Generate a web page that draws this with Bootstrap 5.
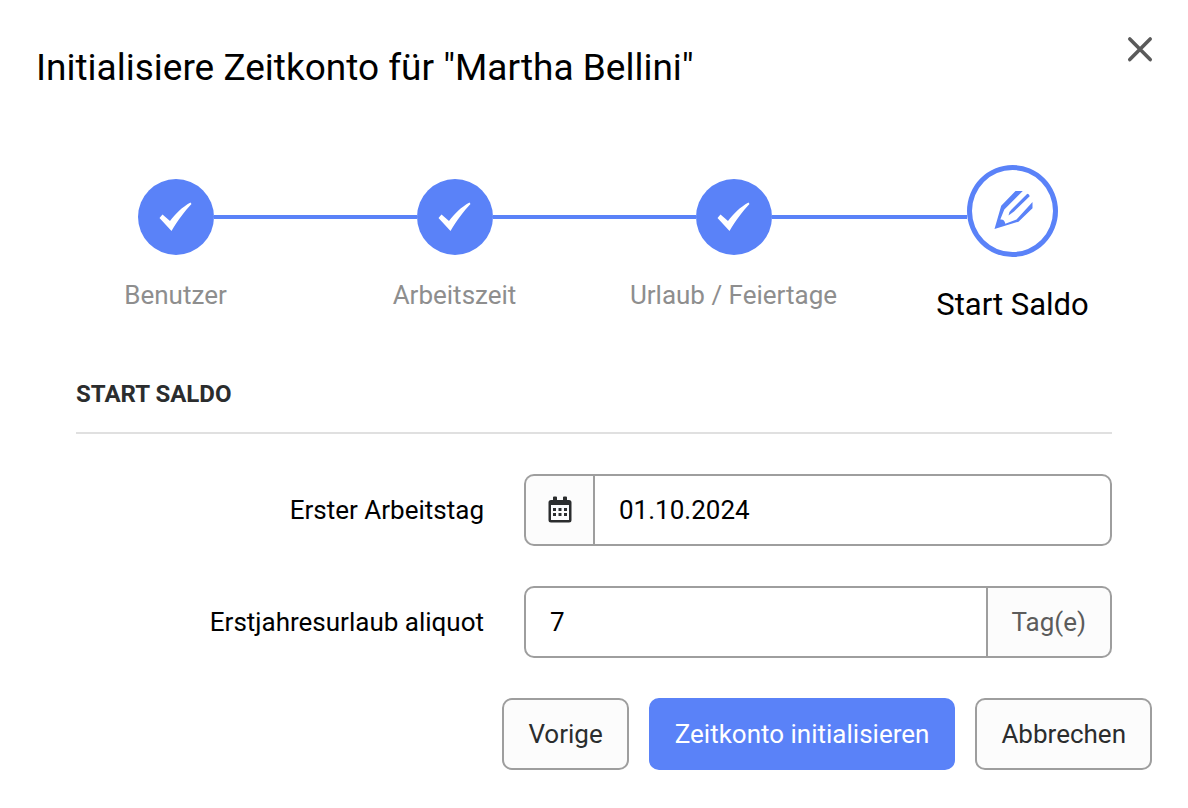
<!DOCTYPE html>
<html lang="de">
<head>
<meta charset="utf-8">
<meta name="viewport" content="width=device-width, initial-scale=1">
<title>Initialisiere Zeitkonto</title>
<link href="https://cdn.jsdelivr.net/npm/bootstrap@5.3.0/dist/css/bootstrap.min.css" rel="stylesheet">
<style>
  :root { --accent: #5a82f8; --edge: #9e9e9e; --soft: #fcfcfc; --ink: #2b2d2e; }
  body { font-family: Roboto, "Liberation Sans", sans-serif; font-size: 26px; line-height: 32px; color: #000; background: #fff; }
  .dialog-pane { padding: 36px; }
  .dialog-title { font-size: 37px; line-height: 64px; font-weight: 400; color: #000; }
  .close-btn { width: 24px; height: 26px; line-height: 0; }
  .stepper { margin-top: 65px; }
  .step-item { flex: 1 1 0; text-align: center; }
  .step-track { height: 104px; }
  .step-line { flex: 1 1 0; height: 4px; background: var(--accent); }
  .step-item:first-child .step-line:first-child,
  .step-item:last-child .step-line:last-child { visibility: hidden; }
  .step-dot { width: 76px; height: 76px; border-radius: 50%; background: var(--accent); color: #fff; }
  .step-text { line-height: 52px; color: #8e8e8e; }
  .is-current .step-dot { width: 91px; height: 92px; background: #fff; color: var(--accent); border: 5px solid var(--accent); align-self: flex-start; }
  .is-current .step-text { font-size: 31px; line-height: 72px; margin-bottom: -2px; color: #000; }
  .form-area { padding: 0 40px; }
  .section-title { font-size: 24px; line-height: 32px; font-weight: 700; color: var(--ink); margin: 39px 0 40px; padding-bottom: 22px; border-bottom: 2px solid #e0e0e0; }
  .field-row { display: grid; grid-template-columns: 408fr 588fr; column-gap: 40px; align-items: center; margin-bottom: 40px; }
  .field-row label { text-align: right; }
  .field-row .input-group-text, .field-row .form-control { height: 72px; font-size: 26px; line-height: 32px; border: 2px solid var(--edge); border-radius: 10px; padding: 0 24px; }
  .field-row .form-control { color: #000; background: #fff; }
  .field-row .input-group-text { background: var(--soft); color: #5c5c5c; }
  .field-row .input-group > .icon-addon { padding: 0 22px; color: var(--ink); border-right: 0; }
  .field-row .input-group > .unit-addon { border-left: 0; }
  .actions { gap: 20px; }
  .actions .btn { height: 72px; font-size: 26px; line-height: 32px; border: 2px solid var(--edge); border-radius: 10px; padding: 0 24px; background: var(--soft); color: var(--ink); }
  .actions .btn-main { background: var(--accent); border-color: var(--accent); color: #fff; }
</style>
</head>
<body>
<main class="dialog-pane">
  <header class="d-flex justify-content-between align-items-start">
    <h1 class="dialog-title m-0">Initialisiere Zeitkonto für "Martha Bellini"</h1>
    <button type="button" class="close-btn btn border-0 p-0" aria-label="Schließen">
      <svg width="24" height="26" viewBox="0 0 24 26" fill="none" stroke="#5a5a5a" stroke-width="3.600" stroke-linecap="round" overflow="visible"><path d="M1.800 3 22.200 23.600M22.200 3 1.800 23.600"/></svg>
    </button>
  </header>

  <ol class="stepper d-flex list-unstyled mb-0">
    <li class="step-item">
      <div class="step-track d-flex align-items-center"><span class="step-line"></span>
        <span class="step-dot d-flex align-items-center justify-content-center"><svg width="36" height="36" viewBox="0 0 36 36" fill="currentColor"><path d="M1.500 19 4.500 15.500 12 22C17 15.500 24 8 32.500 3.500L33.500 5C26 13 20 21 13.500 32Z"/></svg></span>
        <span class="step-line"></span></div>
      <div class="step-text">Benutzer</div>
    </li>
    <li class="step-item">
      <div class="step-track d-flex align-items-center"><span class="step-line"></span>
        <span class="step-dot d-flex align-items-center justify-content-center"><svg width="36" height="36" viewBox="0 0 36 36" fill="currentColor"><path d="M1.500 19 4.500 15.500 12 22C17 15.500 24 8 32.500 3.500L33.500 5C26 13 20 21 13.500 32Z"/></svg></span>
        <span class="step-line"></span></div>
      <div class="step-text">Arbeitszeit</div>
    </li>
    <li class="step-item">
      <div class="step-track d-flex align-items-center"><span class="step-line"></span>
        <span class="step-dot d-flex align-items-center justify-content-center"><svg width="36" height="36" viewBox="0 0 36 36" fill="currentColor"><path d="M1.500 19 4.500 15.500 12 22C17 15.500 24 8 32.500 3.500L33.500 5C26 13 20 21 13.500 32Z"/></svg></span>
        <span class="step-line"></span></div>
      <div class="step-text">Urlaub / Feiertage</div>
    </li>
    <li class="step-item is-current" aria-current="step">
      <div class="step-track d-flex align-items-center"><span class="step-line"></span>
        <span class="step-dot d-flex align-items-center justify-content-center"><svg width="44" height="44" viewBox="0 0 44 44" fill="currentColor"><path d="M3.500 40 10.200 16.700 24.500 2H31.800L13.300 20.500 9.300 30.500Q13.500 30 14.300 34.700L25.500 30.500 41.500 13V19.300L27.500 32.700Z"/><path d="M36.300 4.800Q38.500 5 38.700 7.200L23 22.500 17.500 26.500Q17.500 23 20.500 20.500Z"/></svg></span>
        <span class="step-line"></span></div>
      <div class="step-text">Start Saldo</div>
    </li>
  </ol>

  <form>
    <div class="form-area">
      <h2 class="section-title text-uppercase">Start Saldo</h2>
      <div class="field-row">
        <label for="first-day">Erster Arbeitstag</label>
        <div class="input-group">
          <span class="input-group-text icon-addon"><svg width="24" height="28" viewBox="0 0 24 28" fill="currentColor"><path fill-rule="evenodd" d="M5 4V1.500Q5 .5 6 .5H8Q9 .5 9 1.500V4H15V1.500Q15 .5 16 .5H18Q19 .5 19 1.500V4H21Q23.500 4 23.500 6.500V24Q23.500 26.500 21 26.500H3Q.5 26.500 .5 24V6.500Q.5 4 3 4ZM3 9V24H21V9ZM5 12H8V15H5ZM10.500 12H13.500V15H10.500ZM16 12H19V15H16ZM5 17H8V20H5ZM10.500 17H13.500V20H10.500ZM16 17H19V20H16Z"/></svg></span>
          <input type="text" class="form-control" id="first-day" value="01.10.2024">
        </div>
      </div>
      <div class="field-row">
        <label for="vacation">Erstjahresurlaub aliquot</label>
        <div class="input-group">
          <input type="text" class="form-control" id="vacation" value="7" inputmode="numeric">
          <span class="input-group-text unit-addon">Tag(e)</span>
        </div>
      </div>
    </div>
    <div class="actions d-flex justify-content-end">
      <button type="button" class="btn">Vorige</button>
      <button type="submit" class="btn btn-main">Zeitkonto initialisieren</button>
      <button type="button" class="btn">Abbrechen</button>
    </div>
  </form>
</main>
<script src="https://cdn.jsdelivr.net/npm/bootstrap@5.3.0/dist/js/bootstrap.bundle.min.js"></script>
</body>
</html>
